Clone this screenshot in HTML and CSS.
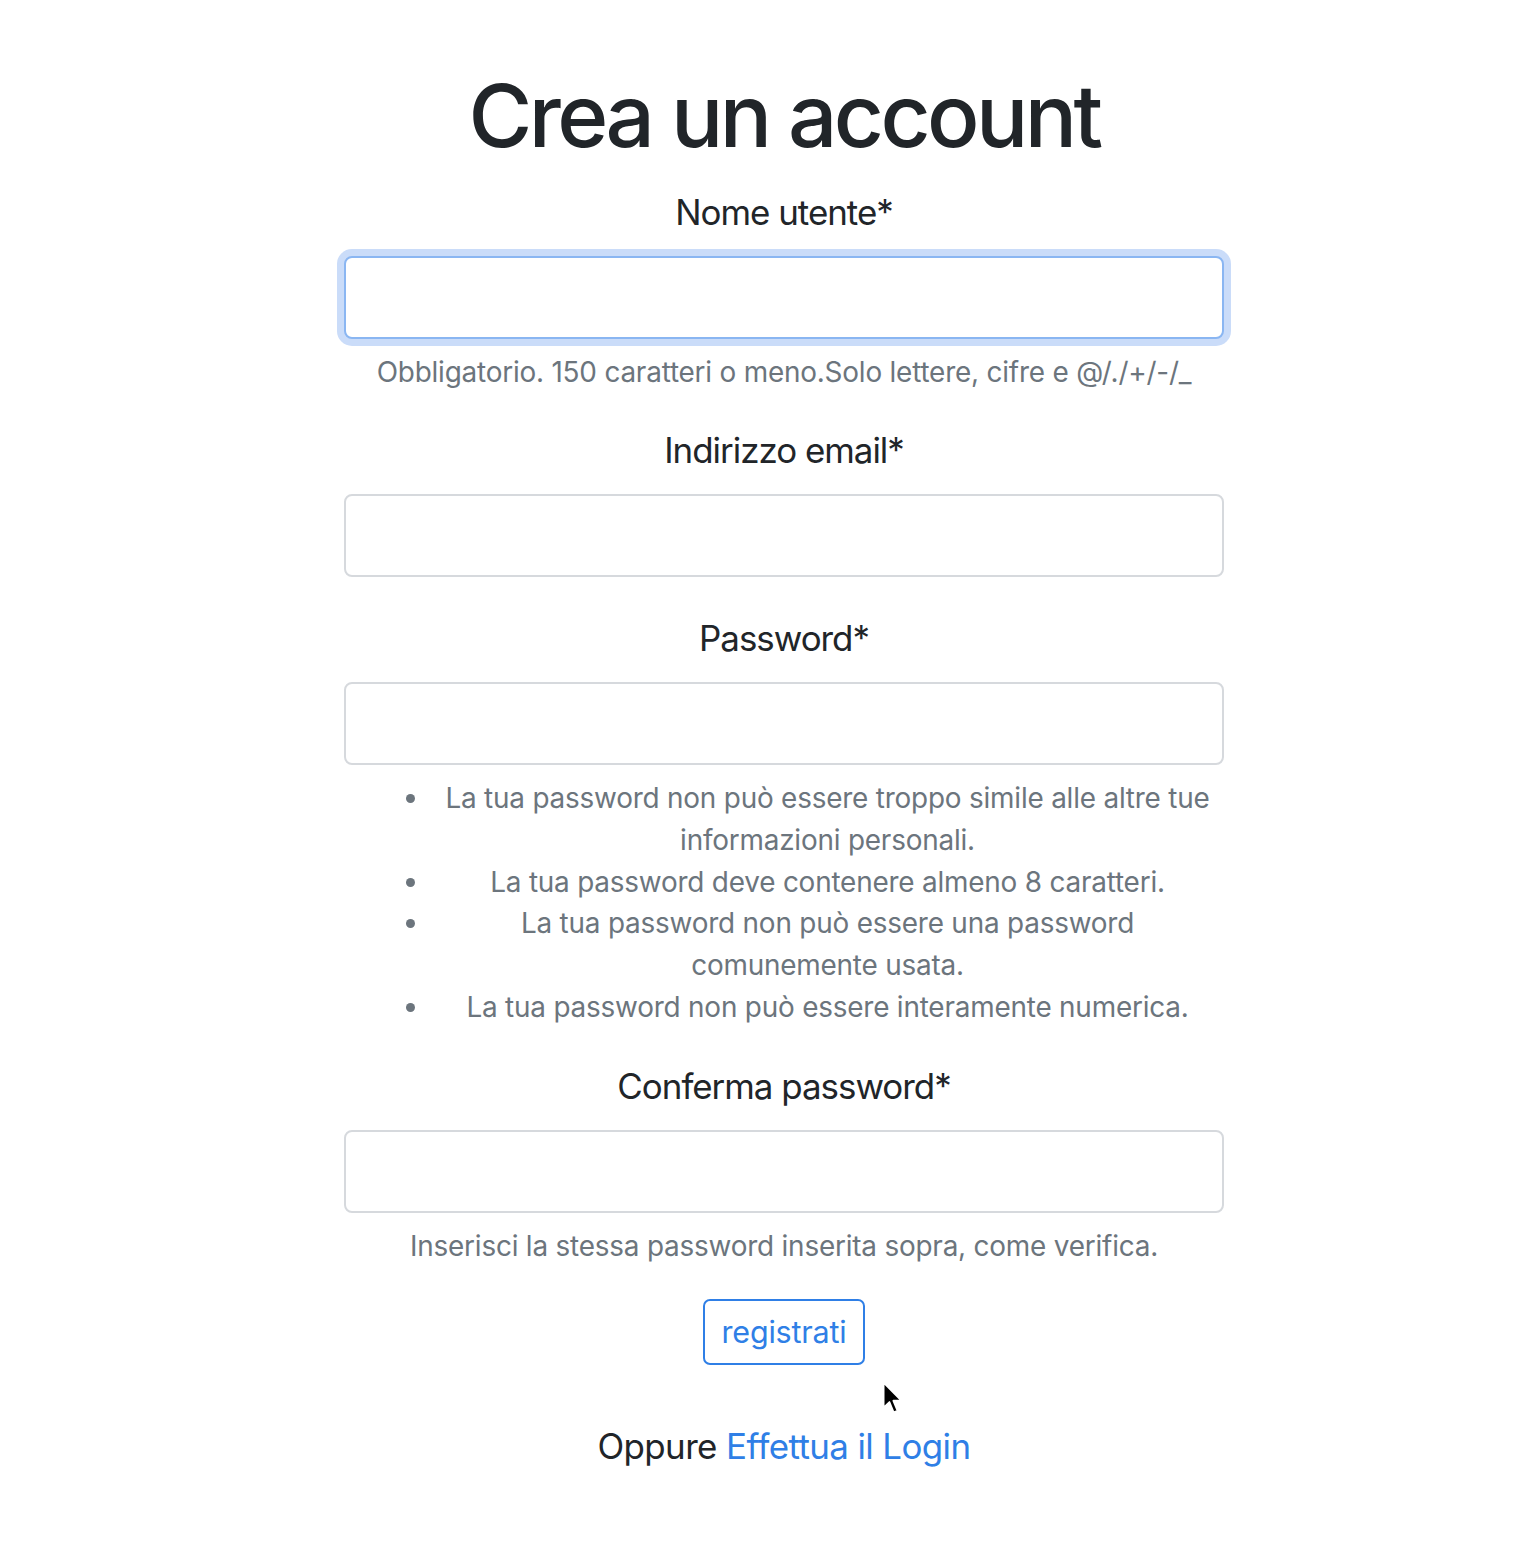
FILE: index.html
```html
<!DOCTYPE html>
<html lang="it">
<head>
<meta charset="utf-8">
<title>Crea un account</title>
<link rel="stylesheet" href="styles.css">
</head>
<body>
<main class="page">
  <h1 class="title">Crea un account</h1>
  <form class="signup">
    <div class="form-group">
      <label class="label" for="id_username">Nome utente*</label>
      <input class="input input-focus" id="id_username" type="text">
      <small class="help">Obbligatorio. 150 caratteri o meno.Solo lettere, cifre e @/./+/-/_</small>
    </div>
    <div class="form-group">
      <label class="label" for="id_email">Indirizzo email*</label>
      <input class="input" id="id_email" type="email">
    </div>
    <div class="form-group">
      <label class="label" for="id_password1">Password*</label>
      <input class="input" id="id_password1" type="password">
      <small class="help">
        <ul class="help-list">
          <li>La tua password non può essere troppo simile alle altre tue informazioni personali.</li>
          <li>La tua password deve contenere almeno 8 caratteri.</li>
          <li>La tua password non può essere una password comunemente usata.</li>
          <li>La tua password non può essere interamente numerica.</li>
        </ul>
      </small>
    </div>
    <div class="form-group">
      <label class="label" for="id_password2">Conferma password*</label>
      <input class="input" id="id_password2" type="password">
      <small class="help">Inserisci la stessa password inserita sopra, come verifica.</small>
    </div>
    <div class="actions">
      <button class="btn" type="button">registrati</button>
      <svg class="cursor" width="21" height="34" viewBox="0 0 13 21" aria-hidden="true">
        <path d="M1 1 L1 16.5 L4.6 13 L7.2 19.4 L9.6 18.4 L7 12.2 L12 12.2 Z" fill="#000" stroke="#fff" stroke-width="1.1" stroke-linejoin="round"/>
      </svg>
    </div>
  </form>
  <p class="alt">Oppure <a class="link" href="#">Effettua il Login</a></p>
</main>
</body>
</html>
```

FILE: styles.css
```css
html, body {
  margin: 0;
  padding: 0;
  background: #ffffff;
}

body {
  font-family: Inter, "Noto Sans", "Liberation Sans", sans-serif;
  font-size: 34.9px;
  line-height: 1.5;
  color: #212529;
}

.page {
  width: 880px;
  margin-left: 344px;
  padding-top: 64px;
  text-align: center;
}

.title {
  margin: 0 0 17.4px 0;
  font-size: 87px;
  font-weight: 500;
  line-height: 1.2;
  letter-spacing: -3.6px;
  color: #212529;
}

.signup {
  margin: 0;
}

.form-group {
  margin-bottom: 34.9px;
}

.label {
  display: inline-block;
  margin-bottom: 17.4px;
  letter-spacing: -1px;
}

.input {
  display: block;
  box-sizing: border-box;
  width: 100%;
  height: 83px;
  margin: 0;
  padding: 0 26px;
  font: inherit;
  color: #495057;
  background: #ffffff;
  border: 2px solid #d6d9dd;
  border-radius: 8px;
  outline: none;
}

.input-focus {
  border-color: #8ab6f2;
  box-shadow: 0 0 0 7px #cadcf9;
}

.help {
  display: block;
  margin-top: 13px;
  margin-bottom: -4px;
  font-size: 27.9px;
  line-height: 41.9px;
  color: #6c757d;
  letter-spacing: -0.2px;
}

.help-list {
  margin: 0 0 34.9px 0;
  padding-left: 87px;
}

.help-list li::marker {
  color: #6c757d;
}

.actions {
  position: relative;
  height: 66px;
  margin-top: 3px;
  display: flex;
  justify-content: center;
}

.btn {
  box-sizing: border-box;
  height: 66px;
  padding: 0 17px;
  font-family: inherit;
  font-size: 30.5px;
  line-height: 1.5;
  color: #2f7fe6;
  background: #ffffff;
  border: 2px solid #2f7fe6;
  border-radius: 7px;
  letter-spacing: -0.2px;
}

.cursor {
  position: absolute;
  left: 538px;
  top: 82px;
}

.alt {
  margin: 55px 0 0 0;
  letter-spacing: -0.6px;
}

.link {
  color: #2f7fe6;
  text-decoration: none;
}
```
